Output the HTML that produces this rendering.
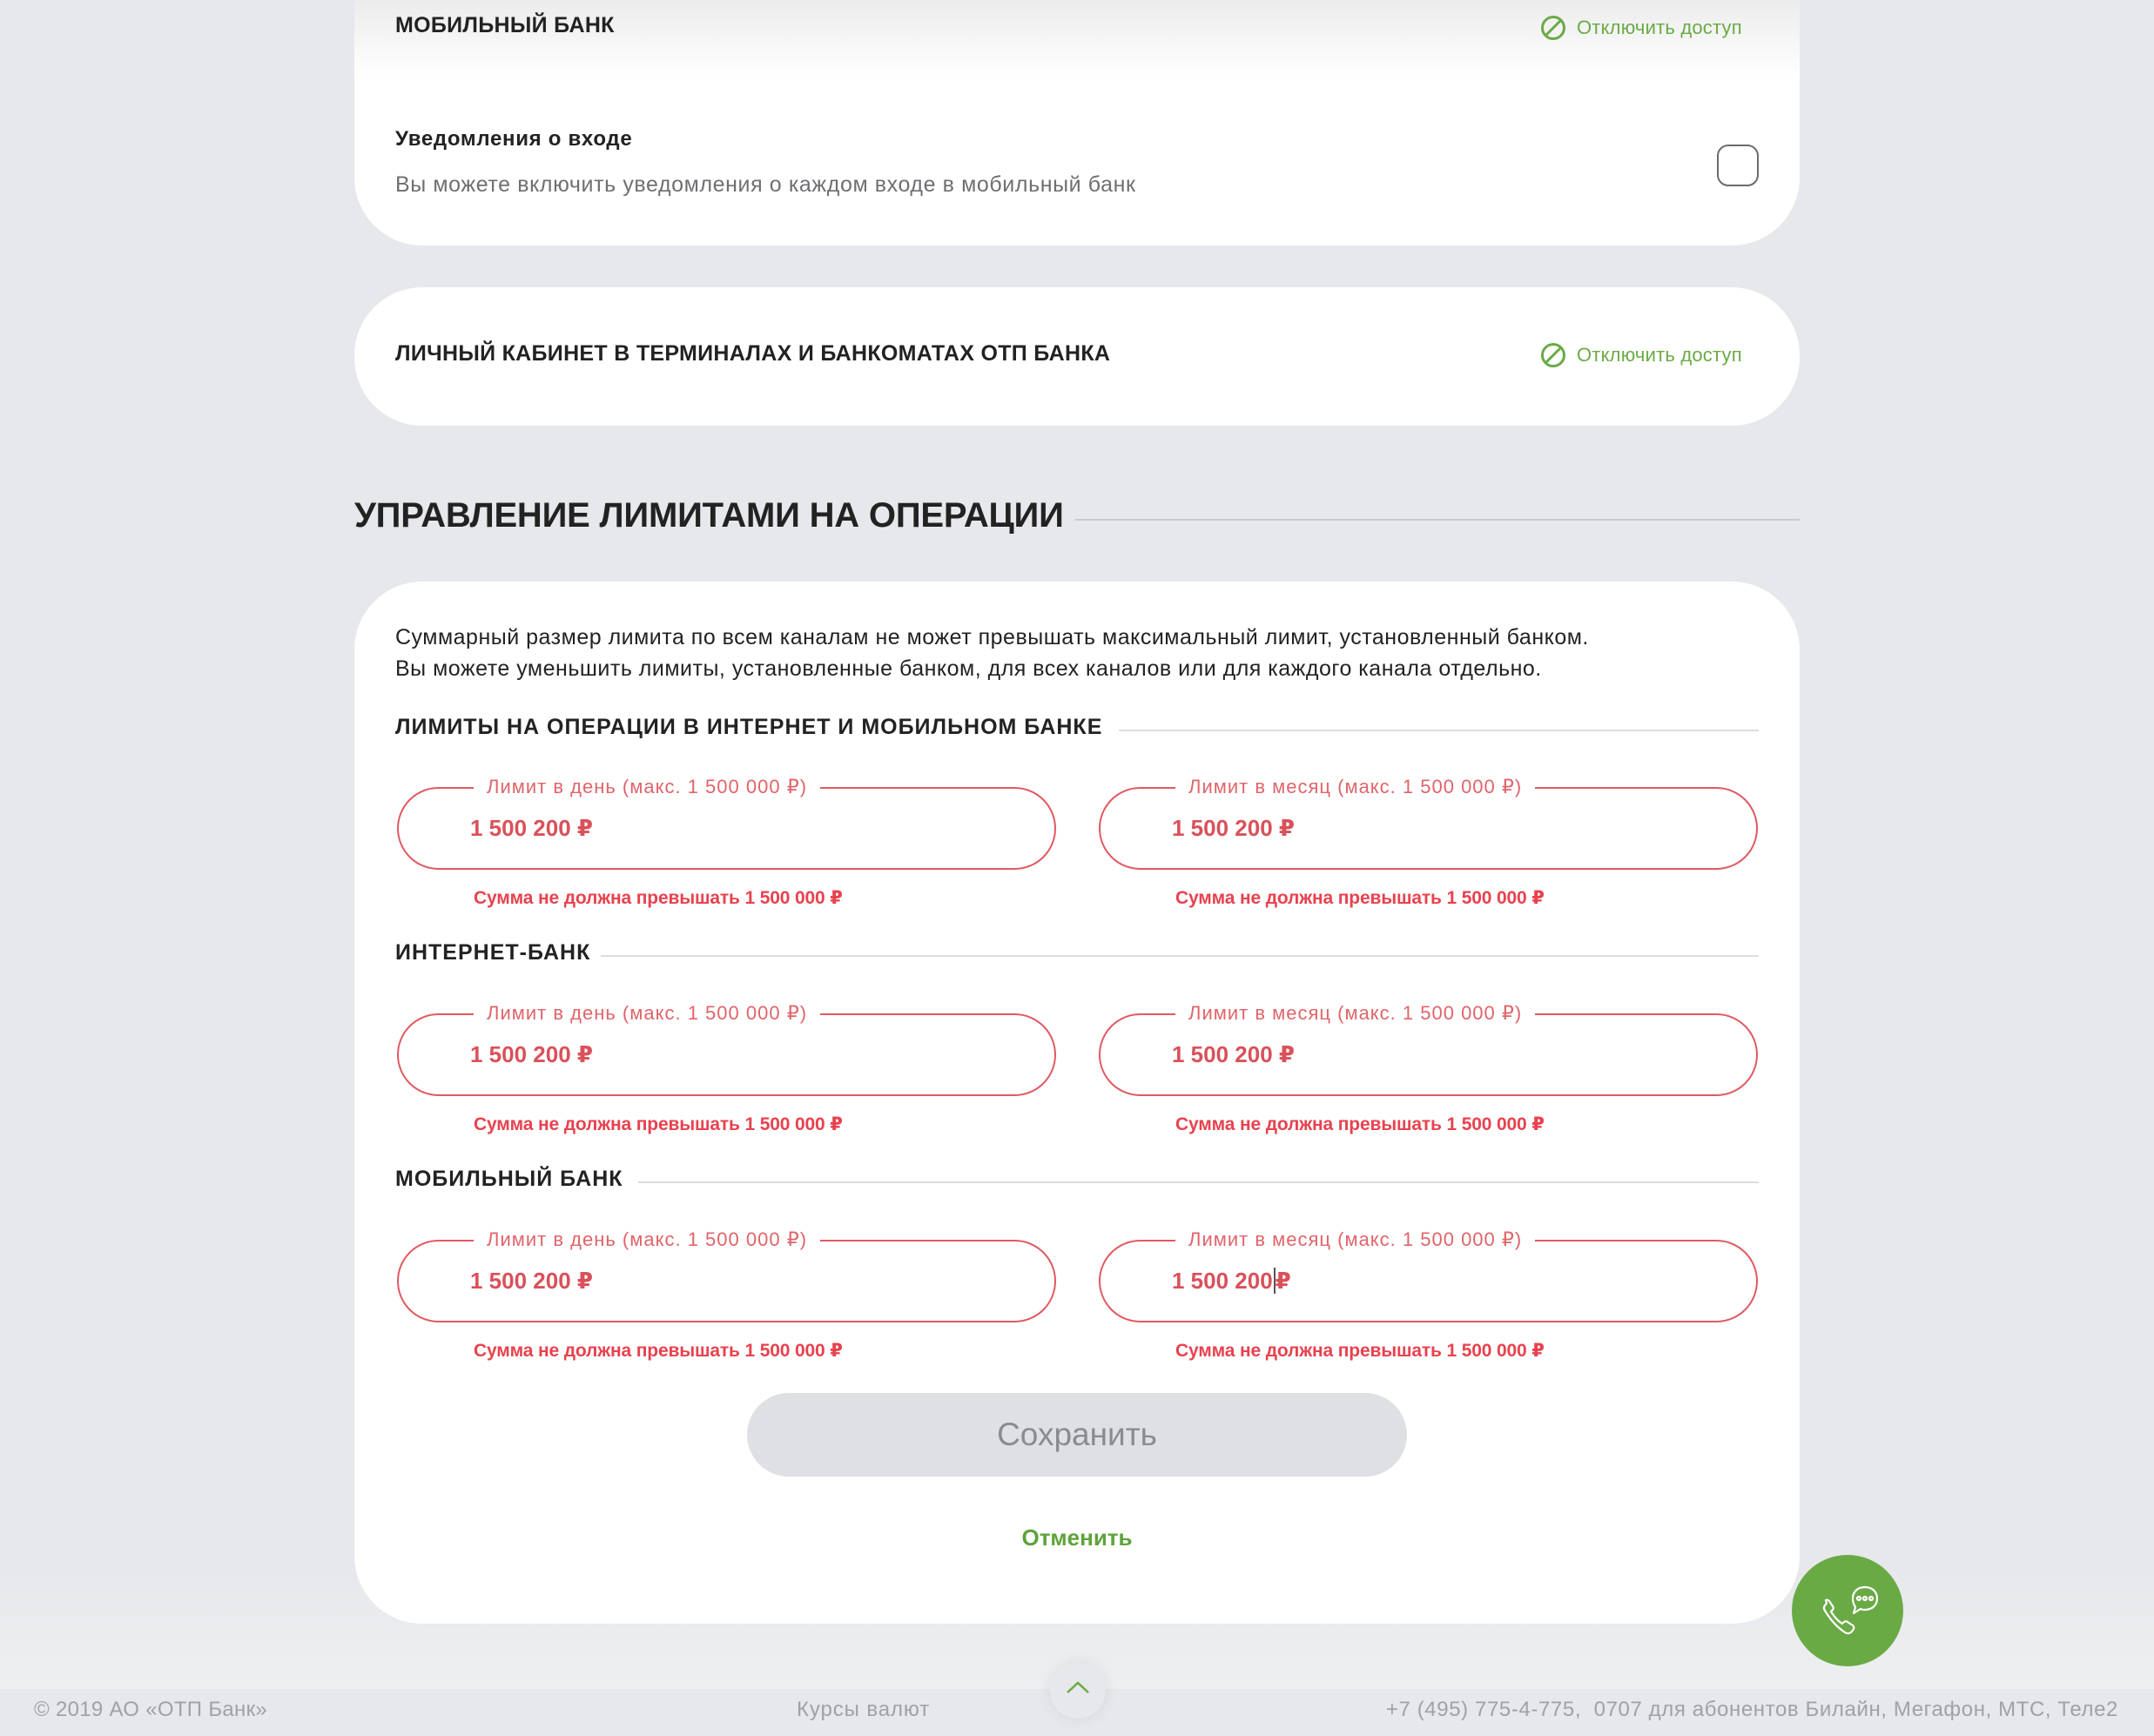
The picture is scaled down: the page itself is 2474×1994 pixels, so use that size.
<!DOCTYPE html>
<html><head><meta charset="utf-8"><style>
*{margin:0;padding:0;box-sizing:border-box}
body{width:2474px;height:1994px;background:#e7e8eb;font-family:"Liberation Sans","DejaVu Sans",sans-serif;position:relative;overflow:hidden;color:#222}
.a{position:absolute;white-space:nowrap}
.card{position:absolute;left:407px;width:1660px;background:#fff;border-radius:78px}
.b{font-weight:bold}
.off{position:absolute;color:#6aaa45;font-size:22px;line-height:30px;letter-spacing:0.2px}
.off svg{position:absolute;left:-42px;top:0}
.inp{position:absolute;width:757px;height:95px;border:2px solid #e05a62;border-radius:48px}
.lab{position:absolute;top:-16px;left:86px;background:#fff;padding:0 15px;color:#e0646a;font-size:22px;line-height:28px;white-space:nowrap;letter-spacing:1px}
.val{position:absolute;left:82px;top:28px;color:#d9515a;font-size:26px;line-height:34px;font-weight:bold;white-space:nowrap}
.err{position:absolute;color:#e8424f;font-size:21px;font-weight:bold;white-space:nowrap;letter-spacing:-0.15px}
.sub{position:absolute;left:454px;font-size:25px;font-weight:bold;white-space:nowrap;line-height:30px;letter-spacing:1px}
.line{position:absolute;height:2px;background:#dcdde0}
.foot{position:absolute;top:1950px;font-size:24px;color:#a0a1a6;white-space:nowrap}
</style></head><body>
<div class="a" style="left:0;top:1800px;width:2474px;height:140px;background:linear-gradient(#e7e8eb,#eeeff1)"></div>

<div class="card" style="top:-100px;height:382px;"></div>
<div class="a" style="left:407px;top:0;width:1660px;height:90px;background:linear-gradient(#ececed,rgba(255,255,255,0))"></div>
<div class="a b" style="left:454px;top:15px;font-size:25px;letter-spacing:0.3px">МОБИЛЬНЫЙ БАНК</div>
<div class="off" style="left:1811px;top:17px"><svg width="30" height="30" viewBox="0 0 30 30"><circle cx="15" cy="15" r="12.5" fill="none" stroke="#6aaa45" stroke-width="3"/><line x1="7" y1="23" x2="23" y2="7" stroke="#6aaa45" stroke-width="3"/></svg>Отключить доступ</div>
<div class="a b" style="left:454px;top:146px;font-size:24px;letter-spacing:0.7px">Уведомления о входе</div>
<div class="a" style="left:454px;top:198px;font-size:25px;color:#6f6f73;letter-spacing:0.6px">Вы можете включить уведомления о каждом входе в мобильный банк</div>
<div class="a" style="left:1972px;top:166px;width:48px;height:48px;border:2.5px solid #6b6b6e;border-radius:13px"></div>

<div class="card" style="top:330px;height:159px"></div>
<div class="a b" style="left:454px;top:392px;font-size:25px;letter-spacing:0.3px">ЛИЧНЫЙ КАБИНЕТ В ТЕРМИНАЛАХ И БАНКОМАТАХ ОТП БАНКА</div>
<div class="off" style="left:1811px;top:393px"><svg width="30" height="30" viewBox="0 0 30 30"><circle cx="15" cy="15" r="12.5" fill="none" stroke="#6aaa45" stroke-width="3"/><line x1="7" y1="23" x2="23" y2="7" stroke="#6aaa45" stroke-width="3"/></svg>Отключить доступ</div>

<div class="a b" style="left:407px;top:570px;font-size:40px;letter-spacing:-0.2px">УПРАВЛЕНИЕ ЛИМИТАМИ НА ОПЕРАЦИИ</div>
<div class="line" style="left:1235px;top:596px;width:832px;background:#c9cacd"></div>

<div class="card" style="top:668px;height:1197px"></div>
<div class="a" style="left:454px;top:714px;font-size:25px;line-height:36px;letter-spacing:0.5px">Суммарный размер лимита по всем каналам не может превышать максимальный лимит, установленный банком.<br>Вы можете уменьшить лимиты, установленные банком, для всех каналов или для каждого канала отдельно.</div>

<div class="sub" style="top:820px">ЛИМИТЫ НА ОПЕРАЦИИ В ИНТЕРНЕТ И МОБИЛЬНОМ БАНКЕ</div>
<div class="line" style="left:1285px;top:838px;width:735px"></div>
<div class="inp" style="left:456px;top:904px"><div class="lab">Лимит в день (макс. 1 500 000 ₽)</div><div class="val">1 500 200 ₽</div></div>
<div class="inp" style="left:1262px;top:904px"><div class="lab">Лимит в месяц (макс. 1 500 000 ₽)</div><div class="val">1 500 200 ₽</div></div>
<div class="err" style="left:544px;top:1019px">Сумма не должна превышать 1 500 000 ₽</div>
<div class="err" style="left:1350px;top:1019px">Сумма не должна превышать 1 500 000 ₽</div>

<div class="sub" style="top:1079px">ИНТЕРНЕТ-БАНК</div>
<div class="line" style="left:690px;top:1097px;width:1330px"></div>
<div class="inp" style="left:456px;top:1164px"><div class="lab">Лимит в день (макс. 1 500 000 ₽)</div><div class="val">1 500 200 ₽</div></div>
<div class="inp" style="left:1262px;top:1164px"><div class="lab">Лимит в месяц (макс. 1 500 000 ₽)</div><div class="val">1 500 200 ₽</div></div>
<div class="err" style="left:544px;top:1279px">Сумма не должна превышать 1 500 000 ₽</div>
<div class="err" style="left:1350px;top:1279px">Сумма не должна превышать 1 500 000 ₽</div>

<div class="sub" style="top:1339px">МОБИЛЬНЫЙ БАНК</div>
<div class="line" style="left:733px;top:1357px;width:1287px"></div>
<div class="inp" style="left:456px;top:1424px"><div class="lab">Лимит в день (макс. 1 500 000 ₽)</div><div class="val">1 500 200 ₽</div></div>
<div class="inp" style="left:1262px;top:1424px"><div class="lab">Лимит в месяц (макс. 1 500 000 ₽)</div><div class="val">1 500 200<span style="border-left:2px solid #555;margin-left:1px"></span>₽</div></div>
<div class="err" style="left:544px;top:1539px">Сумма не должна превышать 1 500 000 ₽</div>
<div class="err" style="left:1350px;top:1539px">Сумма не должна превышать 1 500 000 ₽</div>

<div class="a" style="left:858px;top:1600px;width:758px;height:96px;border-radius:48px;background:#dfe0e4;color:#8a8b8f;font-size:37px;text-align:center;line-height:96px">Сохранить</div>
<div class="a" style="left:858px;top:1751px;width:758px;text-align:center;color:#5ea33b;font-size:26px;font-weight:bold">Отменить</div>

<div class="a" style="left:2058px;top:1786px;width:128px;height:128px;border-radius:50%;background:#6aaa45"></div>
<svg class="a" style="left:2074px;top:1802px" width="96" height="96" viewBox="0 0 96 96" fill="none" stroke="#fff" stroke-width="2.2" stroke-linejoin="round">
<path d="M24 40c-3 2-4 5-2 8 6 10 14 19 23 25 3 2 6 1 8-1l2-3c1-2 0-3-1-4l-6-4c-1-1-3-1-4 0l-2 2c-5-3-10-9-13-14l2-2c1-1 1-3 0-4l-4-6c-1-1-3-2-4-1z"/>
<path d="M54 34c0-8 6-13 14-13s14 5 14 13-6 13-14 13c-2 0-4 0-5-1l-8 5 2-7c-2-3-3-6-3-10z"/>
<circle cx="61" cy="34" r="2"/><circle cx="68" cy="34" r="2"/><circle cx="75" cy="34" r="2"/>
</svg>

<div class="a" style="left:1206px;top:1910px;width:64px;height:64px;border-radius:50%;background:#e7e8eb;box-shadow:0 0 18px rgba(0,0,0,0.08)"></div>
<svg class="a" style="left:1222px;top:1928px" width="32" height="24" viewBox="0 0 32 24"><path d="M4 16 L16 5 L28 16" fill="none" stroke="#6aaa45" stroke-width="2.5"/></svg>

<div class="foot" style="left:39px;letter-spacing:0.3px">© 2019 АО «ОТП Банк»</div>
<div class="foot" style="left:915px;letter-spacing:0.9px">Курсы валют</div>
<div class="foot" style="right:41px;letter-spacing:0.6px">+7 (495) 775-4-775,&nbsp; 0707 для абонентов Билайн, Мегафон, МТС, Теле2</div>
</body></html>
